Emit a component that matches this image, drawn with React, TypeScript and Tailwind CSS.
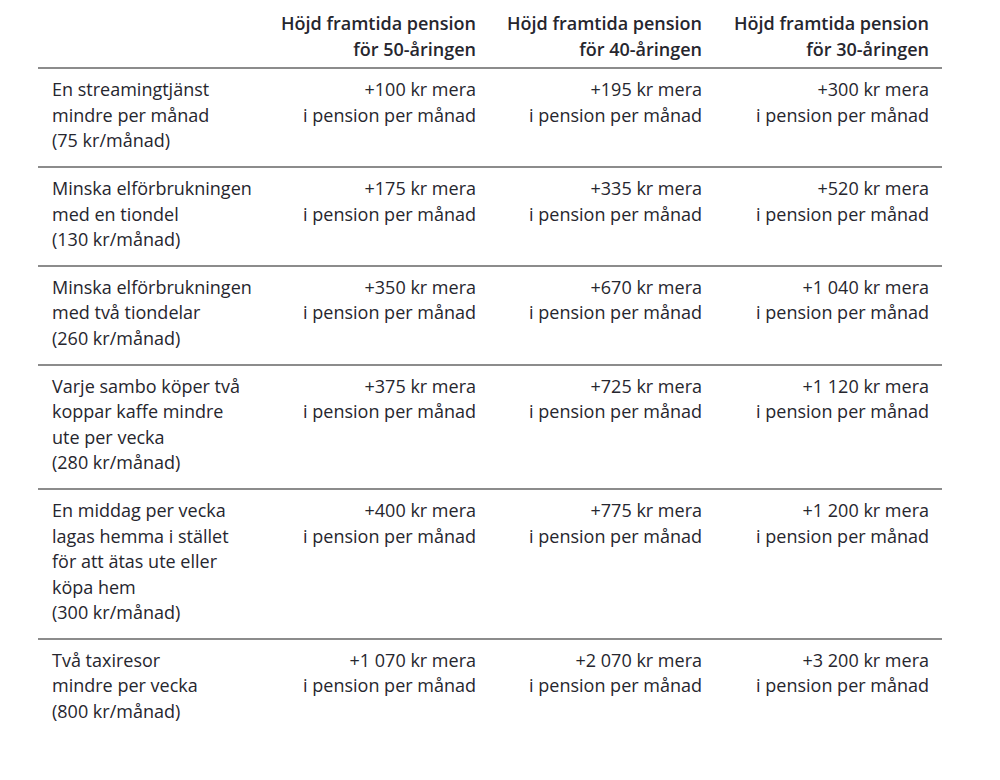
const rows: { label: string[]; values: string[] }[] = [
  {
    label: ["En streamingtjänst", "mindre per månad", "(75 kr/månad)"],
    values: ["+100", "+195", "+300"],
  },
  {
    label: ["Minska elförbrukningen", "med en tiondel", "(130 kr/månad)"],
    values: ["+175", "+335", "+520"],
  },
  {
    label: ["Minska elförbrukningen", "med två tiondelar", "(260 kr/månad)"],
    values: ["+350", "+670", "+1 040"],
  },
  {
    label: ["Varje sambo köper två", "koppar kaffe mindre", "ute per vecka", "(280 kr/månad)"],
    values: ["+375", "+725", "+1 120"],
  },
  {
    label: [
      "En middag per vecka",
      "lagas hemma i stället",
      "för att ätas ute eller",
      "köpa hem",
      "(300 kr/månad)",
    ],
    values: ["+400", "+775", "+1 200"],
  },
  {
    label: ["Två taxiresor", "mindre per vecka", "(800 kr/månad)"],
    values: ["+1 070", "+2 070", "+3 200"],
  },
];

const ages = ["50", "40", "30"];

export default function App() {
  return (
    <div
      className="min-h-[780px] w-[1000px] bg-white pl-[38px] text-[18px] leading-[25.6px] text-[#26262e]"
      style={{ fontFamily: '"Open Sans", "Liberation Sans", sans-serif' }}
    >
      <table className="w-[904px] table-fixed border-collapse">
        <colgroup>
          <col className="w-[225px]" />
          <col className="w-[226px]" />
          <col className="w-[226px]" />
          <col className="w-[227px]" />
        </colgroup>
        <thead>
          <tr className="border-b-2 border-[#8c8c8c]">
            <th />
            {ages.map((age) => (
              <th key={age} className="px-[13px] pt-[11px] pb-[5px] text-right align-top font-semibold whitespace-nowrap">
                Höjd framtida pension
                <br />
                för {age}-åringen
              </th>
            ))}
          </tr>
        </thead>
        <tbody>
          {rows.map((row, i) => (
            <tr
              key={i}
              className={i < rows.length - 1 ? "border-b-2 border-[#8c8c8c]" : ""}
            >
              <td className="pl-[14px] pr-0 pt-[8px] pb-[12px] align-top whitespace-nowrap">
                {row.label.map((l) => (
                  <div key={l}>{l}</div>
                ))}
              </td>
              {row.values.map((v, j) => (
                <td key={j} className="px-[13px] pt-[8px] pb-[12px] text-right align-top whitespace-nowrap">
                  <div>{v} kr mera</div>
                  <div>i pension per månad</div>
                </td>
              ))}
            </tr>
          ))}
        </tbody>
      </table>
    </div>
  );
}
